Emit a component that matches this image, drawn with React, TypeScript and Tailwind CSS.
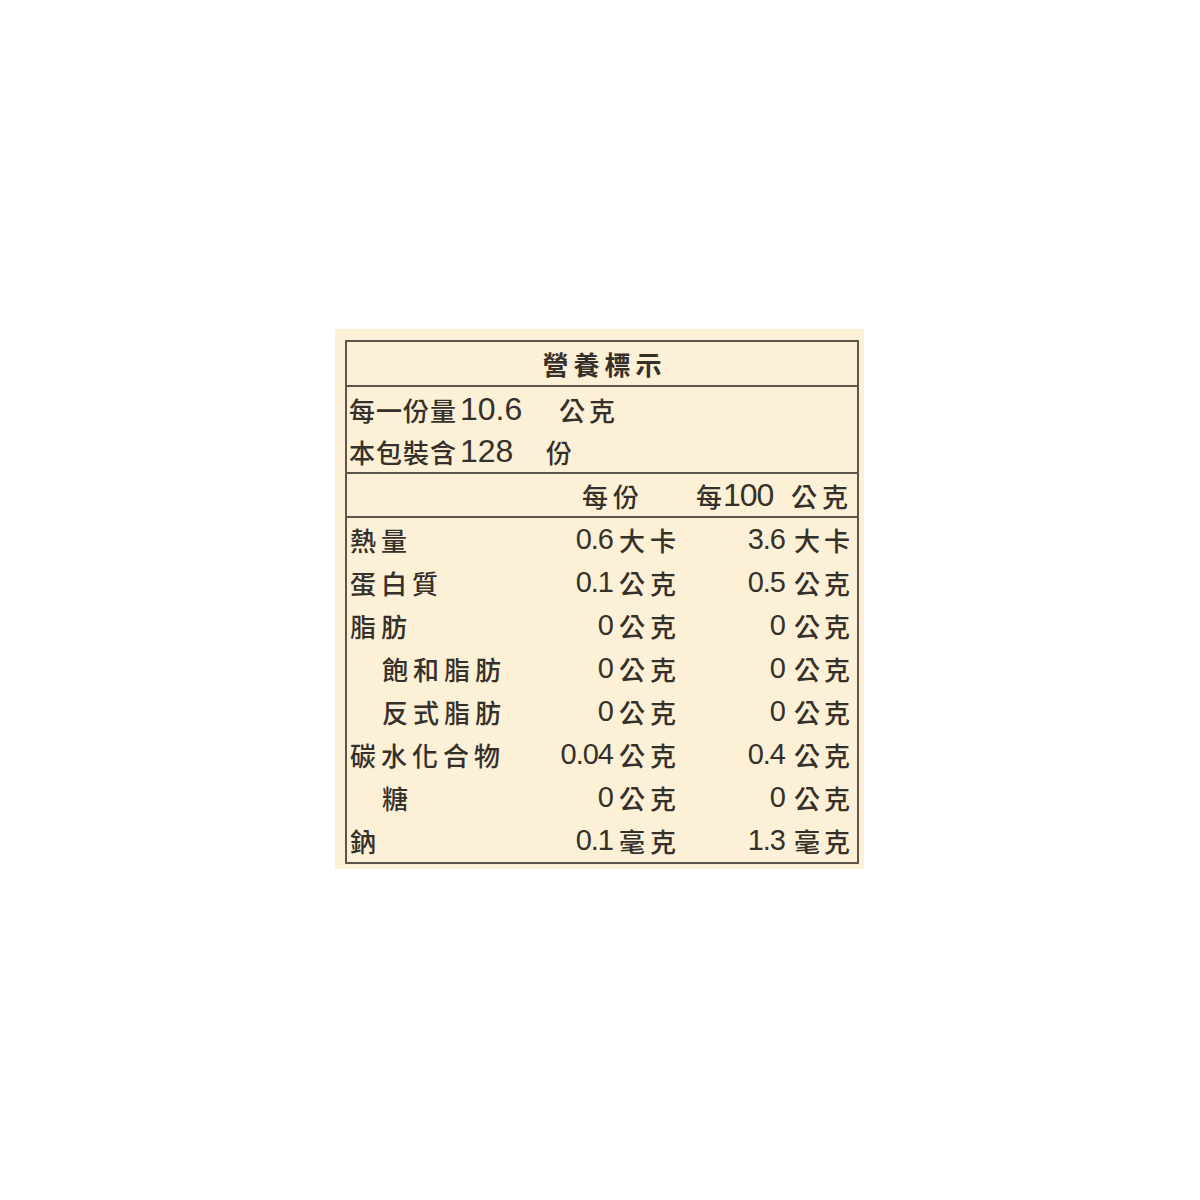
const CJK = "font-['Noto_Sans_CJK_TC',serif]";
const NUM = "font-['Liberation_Sans_Narrow','Liberation_Sans',sans-serif]";

interface NutrientRow {
  label: string;
  indent?: boolean;
  perServing: string;
  unit1: string;
  per100: string;
  unit2: string;
}

const rows: NutrientRow[] = [
  { label: "熱量", perServing: "0.6", unit1: "大卡", per100: "3.6", unit2: "大卡" },
  { label: "蛋白質", perServing: "0.1", unit1: "公克", per100: "0.5", unit2: "公克" },
  { label: "脂肪", perServing: "0", unit1: "公克", per100: "0", unit2: "公克" },
  { label: "飽和脂肪", indent: true, perServing: "0", unit1: "公克", per100: "0", unit2: "公克" },
  { label: "反式脂肪", indent: true, perServing: "0", unit1: "公克", per100: "0", unit2: "公克" },
  { label: "碳水化合物", perServing: "0.04", unit1: "公克", per100: "0.4", unit2: "公克" },
  { label: "糖", indent: true, perServing: "0", unit1: "公克", per100: "0", unit2: "公克" },
  { label: "鈉", perServing: "0.1", unit1: "毫克", per100: "1.3", unit2: "毫克" },
];

export default function App() {
  return (
    <div className="min-h-[1200px] w-[1200px] bg-white pl-[335px] pt-[329px] text-[#35302a]">
      <div className="h-[540px] w-[529px] bg-[#fcf0d6] pl-[10px] pt-[11px]">
        <div className="w-[514px] border-2 border-[#5c564b]">
          {/* title */}
          <div className="flex h-[45px] items-center justify-center border-b-2 border-[#5c564b]">
            <span className={`${CJK} pl-[5px] text-[26px] font-bold tracking-[5px]`}>營養標示</span>
          </div>

          {/* serving */}
          <div className="h-[87px] border-b-2 border-[#5c564b] pl-[2px] pt-[1px]">
            <div className="flex h-[42px] items-center">
              <span className={`${CJK} w-[111px] text-[26px] font-medium tracking-[1px]`}>每一份量</span>
              <span className={`${NUM} w-[99px] text-[32px] font-medium`}>10.6</span>
              <span className={`${CJK} text-[26px] font-medium tracking-[4px]`}>公克</span>
            </div>
            <div className="flex h-[42px] items-center">
              <span className={`${CJK} w-[111px] text-[26px] font-medium tracking-[1px]`}>本包裝含</span>
              <span className={`${NUM} w-[86px] text-[32px] font-medium`}>128</span>
              <span className={`${CJK} text-[26px] font-medium`}>份</span>
            </div>
          </div>

          {/* header */}
          <div className="flex h-[44px] items-center border-b-2 border-[#5c564b]">
            <span className="w-[235px]" />
            <span className={`${CJK} w-[114px] text-[26px] font-medium tracking-[5px]`}>每份</span>
            <span className={`${CJK} text-[26px] font-medium`}>每</span>
            <span className={`${NUM} ml-[1px] w-[68px] text-[32px] font-medium tracking-[-1px]`}>100</span>
            <span className={`${CJK} text-[26px] font-medium tracking-[5px]`}>公克</span>
          </div>

          {/* nutrients */}
          <div className="pl-[3px]">
            {rows.map((r) => (
              <div
                key={r.label}
                className="grid h-[43px] grid-cols-[210px_53px_86px_86px_1fr] items-center"
              >
                <span
                  className={`${CJK} text-[26px] font-medium tracking-[5px] ${r.indent ? "pl-[32px]" : ""}`}
                >
                  {r.label}
                </span>
                <span className={`${NUM} text-right text-[29px] font-medium tracking-[-1px]`}>
                  {r.perServing}
                </span>
                <span className={`${CJK} pl-[6px] text-[26px] font-medium tracking-[5px]`}>{r.unit1}</span>
                <span className={`${NUM} text-right text-[29px] font-medium tracking-[-1px]`}>
                  {r.per100}
                </span>
                <span className={`${CJK} pl-[9px] text-[26px] font-medium tracking-[4px]`}>{r.unit2}</span>
              </div>
            ))}
          </div>
        </div>
      </div>
    </div>
  );
}
